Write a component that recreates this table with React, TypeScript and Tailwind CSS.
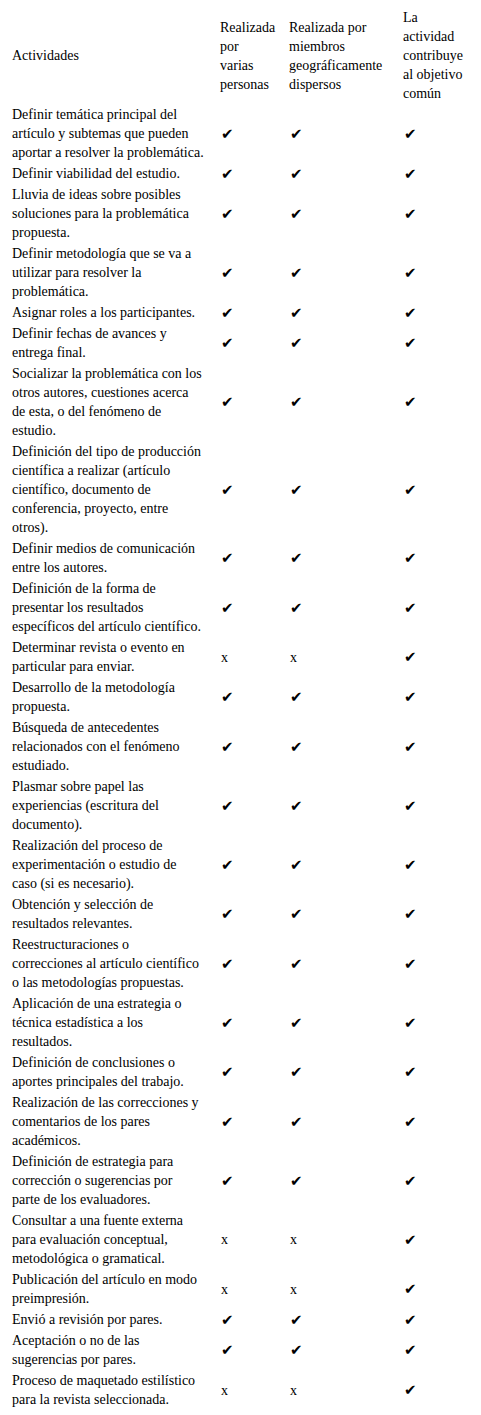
import React from "react";

type Mark = "v" | "x";
const rows: [string[], Mark, Mark, Mark][] = [
  [["Definir temática principal del", "artículo y subtemas que pueden", "aportar a resolver la problemática."], "v", "v", "v"],
  [["Definir viabilidad del estudio."], "v", "v", "v"],
  [["Lluvia de ideas sobre posibles", "soluciones para la problemática", "propuesta."], "v", "v", "v"],
  [["Definir metodología que se va a", "utilizar para resolver la", "problemática."], "v", "v", "v"],
  [["Asignar roles a los participantes."], "v", "v", "v"],
  [["Definir fechas de avances y", "entrega final."], "v", "v", "v"],
  [["Socializar la problemática con los", "otros autores, cuestiones acerca", "de esta, o del fenómeno de", "estudio."], "v", "v", "v"],
  [["Definición del tipo de producción", "científica a realizar (artículo", "científico, documento de", "conferencia, proyecto, entre", "otros)."], "v", "v", "v"],
  [["Definir medios de comunicación", "entre los autores."], "v", "v", "v"],
  [["Definición de la forma de", "presentar los resultados", "específicos del artículo científico."], "v", "v", "v"],
  [["Determinar revista o evento en", "particular para enviar."], "x", "x", "v"],
  [["Desarrollo de la metodología", "propuesta."], "v", "v", "v"],
  [["Búsqueda de antecedentes", "relacionados con el fenómeno", "estudiado."], "v", "v", "v"],
  [["Plasmar sobre papel las", "experiencias (escritura del", "documento)."], "v", "v", "v"],
  [["Realización del proceso de", "experimentación o estudio de", "caso (si es necesario)."], "v", "v", "v"],
  [["Obtención y selección de", "resultados relevantes."], "v", "v", "v"],
  [["Reestructuraciones o", "correcciones al artículo científico", "o las metodologías propuestas."], "v", "v", "v"],
  [["Aplicación de una estrategia o", "técnica estadística a los", "resultados."], "v", "v", "v"],
  [["Definición de conclusiones o", "aportes principales del trabajo."], "v", "v", "v"],
  [["Realización de las correcciones y", "comentarios de los pares", "académicos."], "v", "v", "v"],
  [["Definición de estrategia para", "corrección o sugerencias por", "parte de los evaluadores."], "v", "v", "v"],
  [["Consultar a una fuente externa", "para evaluación conceptual,", "metodológica o gramatical."], "x", "x", "v"],
  [["Publicación del artículo en modo", "preimpresión."], "x", "x", "v"],
  [["Envió a revisión por pares."], "v", "v", "v"],
  [["Aceptación o no de las", "sugerencias por pares."], "v", "v", "v"],
  [["Proceso de maquetado estilístico", "para la revista seleccionada."], "x", "x", "v"],
];

function Lines({ lines }: { lines: string[] }) {
  return (
    <>
      {lines.map((l, i) => (
        <span key={i} className="block whitespace-nowrap">
          {l}
        </span>
      ))}
    </>
  );
}

function MarkCell({ m }: { m: Mark }) {
  return (
    <td className="px-[2px] pt-[1px] pb-[1px] align-middle">
      <div className="flex h-[19px] items-center">
        {m === "v" ? (
          <span className="font-['DejaVu_Sans',sans-serif] text-[15px] leading-none pl-[1px] pt-[1px]">✔</span>
        ) : (
          <span className="pl-[1px]">x</span>
        )}
      </div>
    </td>
  );
}

export default function App() {
  return (
    <div className="bg-white text-black pt-[7px] pl-[10px] font-['Liberation_Serif','Times_New_Roman',serif] text-[14px] leading-[19px]">
      <table className="table-fixed border-separate border-spacing-0 w-[459px]">
        <colgroup>
          <col className="w-[208px]" />
          <col className="w-[69px]" />
          <col className="w-[114px]" />
          <col className="w-[68px]" />
        </colgroup>
        <thead>
          <tr>
            <th className="pl-[2px] pr-[12px] pt-[1px] pb-[1px] font-normal text-left align-middle">
              <Lines lines={["Actividades"]} />
            </th>
            <th className="px-[2px] pt-[1px] pb-[1px] font-normal text-left align-middle">
              <Lines lines={["Realizada", "por", "varias", "personas"]} />
            </th>
            <th className="px-[2px] pt-[1px] pb-[1px] font-normal text-left align-middle">
              <Lines lines={["Realizada por", "miembros", "geográficamente", "dispersos"]} />
            </th>
            <th className="px-[2px] pt-[1px] pb-[1px] font-normal text-left align-middle">
              <Lines lines={["La", "actividad", "contribuye", "al objetivo", "común"]} />
            </th>
          </tr>
        </thead>
        <tbody>
          {rows.map((r, i) => (
            <tr key={i}>
              <td className="pl-[2px] pr-[12px] pt-[1px] pb-[1px] align-middle">
                <Lines lines={r[0]} />
              </td>
              <MarkCell m={r[1]} />
              <MarkCell m={r[2]} />
              <MarkCell m={r[3]} />
            </tr>
          ))}
        </tbody>
      </table>
    </div>
  );
}
